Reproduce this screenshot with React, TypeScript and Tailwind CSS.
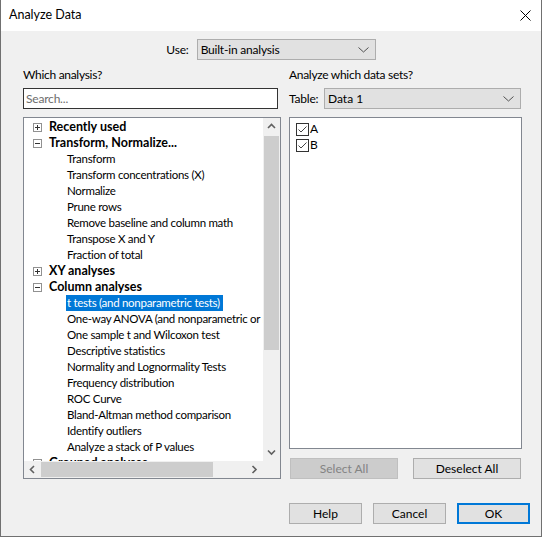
import React from "react";

const font = { fontFamily: 'Lato, "Liberation Sans", sans-serif' };

type Row = { text: string; level: 0 | 1; open?: boolean; selected?: boolean };

const rows: Row[] = [
  { text: "Recently used", level: 0, open: false },
  { text: "Transform, Normalize...", level: 0, open: true },
  { text: "Transform", level: 1 },
  { text: "Transform concentrations (X)", level: 1 },
  { text: "Normalize", level: 1 },
  { text: "Prune rows", level: 1 },
  { text: "Remove baseline and column math", level: 1 },
  { text: "Transpose X and Y", level: 1 },
  { text: "Fraction of total", level: 1 },
  { text: "XY analyses", level: 0, open: false },
  { text: "Column analyses", level: 0, open: true },
  { text: "t tests (and nonparametric tests)", level: 1, selected: true },
  { text: "One-way ANOVA (and nonparametric or mixed)", level: 1 },
  { text: "One sample t and Wilcoxon test", level: 1 },
  { text: "Descriptive statistics", level: 1 },
  { text: "Normality and Lognormality Tests", level: 1 },
  { text: "Frequency distribution", level: 1 },
  { text: "ROC Curve", level: 1 },
  { text: "Bland-Altman method comparison", level: 1 },
  { text: "Identify outliers", level: 1 },
  { text: "Analyze a stack of P values", level: 1 },
  { text: "Grouped analyses", level: 0, open: false },
];

function Arrow({ dir }: { dir: "up" | "down" | "left" | "right" }) {
  const pts = {
    up: "1,5 4.5,1.5 8,5",
    down: "1,1.5 4.5,5 8,1.5",
    left: "5,1 1.5,4.5 5,8",
    right: "1.5,1 5,4.5 1.5,8",
  }[dir];
  const vertical = dir === "up" || dir === "down";
  return (
    <svg width={vertical ? 9 : 7} height={vertical ? 7 : 9} viewBox={vertical ? "0 0 9 7" : "0 0 7 9"}>
      <polyline points={pts} fill="none" stroke="#606060" strokeWidth="1.6" />
    </svg>
  );
}

function DropChevron() {
  return (
    <svg width="11" height="6" viewBox="0 0 11 6">
      <polyline points="0.5,0.5 5.5,5 10.5,0.5" fill="none" stroke="#505050" strokeWidth="1" />
    </svg>
  );
}

function Expander({ open }: { open: boolean }) {
  return (
    <div className="relative w-[9px] h-[9px] border border-[#919191] bg-white">
      <div className="absolute left-[1px] top-[3px] w-[5px] h-px bg-[#333]" />
      {!open && <div className="absolute left-[3px] top-[1px] w-px h-[5px] bg-[#333]" />}
    </div>
  );
}

function CheckBox() {
  return (
    <div className="w-[13px] h-[13px] border border-[#333] bg-white flex items-center justify-center">
      <svg width="11" height="11" viewBox="0 0 11 11">
        <polyline points="1.5,5.5 4,8 9.5,2.5" fill="none" stroke="#444" strokeWidth="1" />
      </svg>
    </div>
  );
}

function Button({ label, disabled, primary }: { label: string; disabled?: boolean; primary?: boolean }) {
  const cls = disabled
    ? "bg-[#cccccc] border border-[#bfbfbf] text-[#838383]"
    : primary
      ? "bg-[#e1e1e1] border-2 border-[#0078d7] text-black"
      : "bg-[#e1e1e1] border border-[#adadad] text-black";
  return (
    <div className={`h-[21px] flex items-center justify-center text-[12px] ${cls}`}>{label}</div>
  );
}

export default function App() {
  return (
    <div
      className="w-[542px] h-[537px] bg-[#f0f0f0] border-x border-b border-[#707070] flex flex-col text-black overflow-hidden"
      style={font}
    >
      {/* title bar */}
      <div className="h-[31px] bg-white flex items-center justify-between pl-[8px] pr-[10px] shrink-0">
        <span className="text-[12.5px]">Analyze Data</span>
        <svg width="11" height="11" viewBox="0 0 11 11">
          <path d="M0.5 0.5 L10.5 10.5 M10.5 0.5 L0.5 10.5" stroke="#000" strokeWidth="1" />
        </svg>
      </div>

      {/* use row */}
      <div className="mt-[8px] flex items-center justify-center gap-[8px] h-[21px]">
        <span className="text-[12px] tracking-[-0.2px]">Use:</span>
        <div className="w-[179px] h-[21px] bg-[#e1e1e1] border border-[#adadad] flex items-center justify-between pl-[3px] pr-[6px] text-[12px] tracking-[-0.2px]">
          <span>Built-in analysis</span>
          <DropChevron />
        </div>
      </div>

      {/* columns */}
      <div className="mt-[5px] flex pl-[22px] gap-[8px]">
        {/* left column */}
        <div className="w-[258px] flex flex-col">
          <div className="h-[20px] leading-[20px] text-[12px] tracking-[-0.3px]">Which analysis?</div>
          <div className="mt-[3px] w-[255px] h-[21px] border border-[#333] bg-white flex items-center pl-[2px] text-[12px] tracking-[-0.2px] text-[#6d6d6d]">
            Search...
          </div>
          <div className="mt-[8px] h-[362px] border border-[#828790] bg-white flex flex-col">
            <div className="flex flex-1 min-h-0">
              <div className="flex-1 overflow-hidden pt-px">
                {rows.map((r) => (
                  <div key={r.text} className="h-[16px] flex items-center whitespace-nowrap text-[11.5px] tracking-[-0.28px]">
                    {r.level === 0 ? (
                      <>
                        <div className="w-[9px] ml-[9px] mr-[7px] flex items-center">
                          <Expander open={!!r.open} />
                        </div>
                        <span className="font-bold text-[12.5px] tracking-normal">{r.text}</span>
                      </>
                    ) : (
                      <span
                        className={`ml-[42px] h-[16px] flex items-center px-px ${
                          r.selected ? "bg-[#0078d7] text-white pr-[3px]" : ""
                        }`}
                      >
                        {r.text}
                      </span>
                    )}
                  </div>
                ))}
              </div>
              {/* vertical scrollbar */}
              <div className="w-[17px] bg-[#f0f0f0] flex flex-col items-center">
                <div className="h-[17px] flex items-center justify-center">
                  <Arrow dir="up" />
                </div>
                <div className="flex-1 w-full px-px pt-[1px]">
                  <div className="h-[214px] bg-[#cdcdcd]" />
                </div>
                <div className="h-[17px] flex items-center justify-center">
                  <Arrow dir="down" />
                </div>
              </div>
            </div>
            {/* horizontal scrollbar */}
            <div className="h-[17px] flex shrink-0">
              <div className="flex-1 bg-[#f0f0f0] flex items-center">
                <div className="w-[17px] h-[17px] flex items-center justify-center">
                  <Arrow dir="left" />
                </div>
                <div className="flex-1 h-full py-px">
                  <div className="w-[172px] h-full bg-[#cdcdcd]" />
                </div>
                <div className="w-[17px] h-[17px] flex items-center justify-center">
                  <Arrow dir="right" />
                </div>
              </div>
              <div className="w-[17px] bg-[#f0f0f0]" />
            </div>
          </div>
        </div>

        {/* right column */}
        <div className="w-[233px] flex flex-col">
          <div className="h-[20px] leading-[20px] text-[12px] tracking-[-0.3px]">Analyze which data sets?</div>
          <div className="mt-[3px] h-[21px] flex items-center justify-between">
            <span className="text-[12px] tracking-[-0.2px]">Table:</span>
            <div className="w-[197px] h-[21px] bg-[#e1e1e1] border border-[#adadad] flex items-center justify-between pl-[3px] pr-[6px] text-[12px] mr-px">
              <span>Data 1</span>
              <DropChevron />
            </div>
          </div>
          <div className="mt-[8px] h-[332px] border border-[#828790] bg-white pt-[3px] pl-[6px] flex flex-col">
            {["A", "B"].map((l) => (
              <div key={l} className="h-[16px] flex items-center gap-px text-[12px]">
                <CheckBox />
                <span>{l}</span>
              </div>
            ))}
          </div>
          <div className="mt-[9px] flex justify-between px-px">
            <div className="w-[108px]">
              <Button label="Select All" disabled />
            </div>
            <div className="w-[108px]">
              <Button label="Deselect All" />
            </div>
          </div>
        </div>
      </div>

      {/* bottom buttons */}
      <div className="mt-[24px] flex justify-end gap-[11px] pr-[11px]">
        <div className="w-[73px]">
          <Button label="Help" />
        </div>
        <div className="w-[73px]">
          <Button label="Cancel" />
        </div>
        <div className="w-[73px]">
          <Button label="OK" primary />
        </div>
      </div>
    </div>
  );
}
